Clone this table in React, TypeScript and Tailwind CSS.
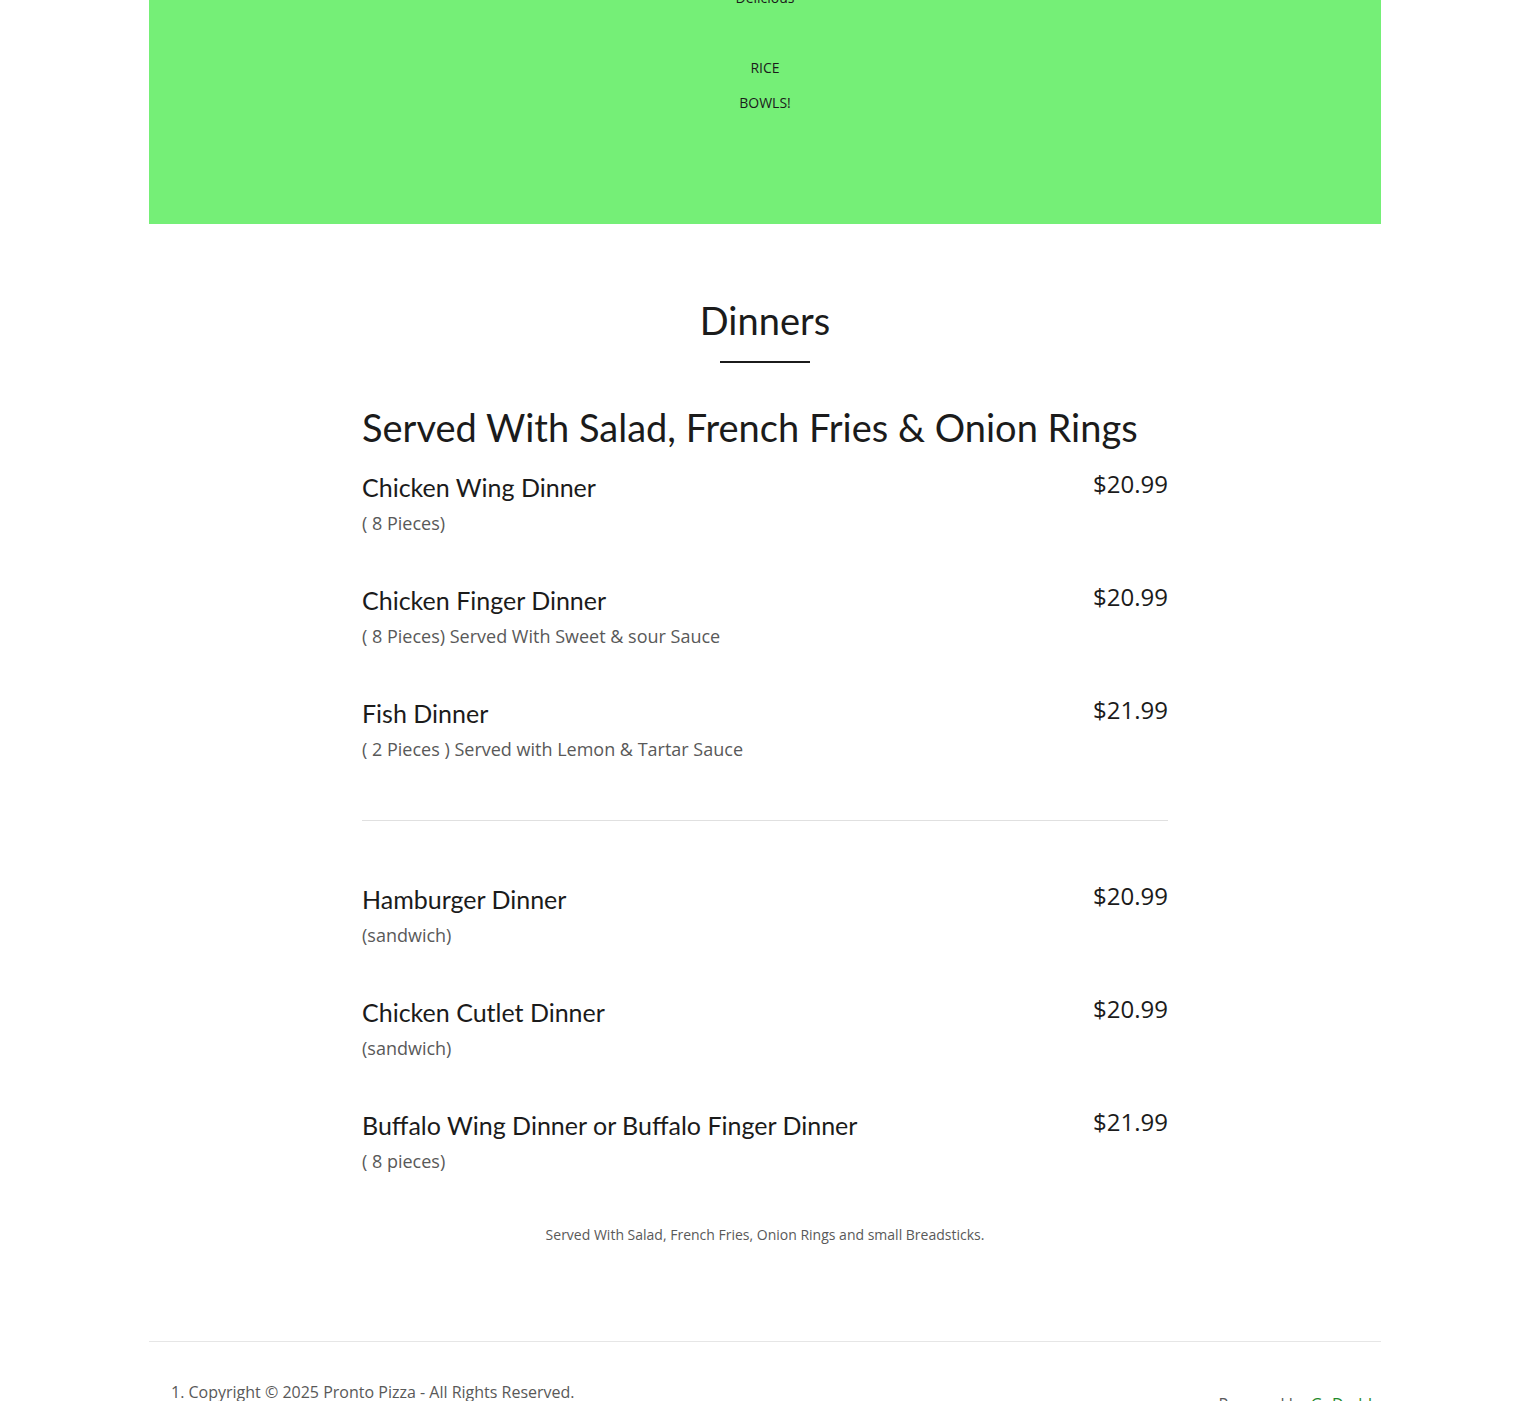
import React from "react";

const items1 = [
  { name: "Chicken Wing Dinner", desc: "( 8 Pieces)", price: "$20.99" },
  { name: "Chicken Finger Dinner", desc: "( 8 Pieces) Served With Sweet & sour Sauce", price: "$20.99" },
  { name: "Fish Dinner", desc: "( 2 Pieces ) Served with Lemon & Tartar Sauce", price: "$21.99" },
];
const items2 = [
  { name: "Hamburger Dinner", desc: "(sandwich)", price: "$20.99" },
  { name: "Chicken Cutlet Dinner", desc: "(sandwich)", price: "$20.99" },
  { name: "Buffalo Wing Dinner or Buffalo Finger Dinner", desc: "( 8 pieces)", price: "$21.99" },
];

const heading = { fontFamily: "Lato, 'Noto Sans', sans-serif" };
const body = { fontFamily: "'Open Sans', 'Noto Sans', sans-serif" };

function Item({ name, desc, price }: { name: string; desc: string; price: string }) {
  return (
    <div className="flex justify-between">
      <div className="flex flex-col gap-[7px]">
        <div className="text-[25px] leading-[32px] text-[#1b1b1b]" style={heading}>{name}</div>
        <div className="text-[18px] leading-[27px] text-[#595959]" style={body}>{desc}</div>
      </div>
      <div className="text-[24px] leading-[32px] text-[#1b1b1b] -mt-[3px]" style={body}>{price}</div>
    </div>
  );
}

export default function App() {
  return (
    <div className="bg-white min-h-[1401px] overflow-hidden">
      <div className="mt-[-20px] w-[1232px] mx-auto">
        <div className="bg-[#75ef77] pb-[104px] flex flex-col items-center text-[14px] leading-[35px] text-[#1b1b1b]" style={body}>
          <div>Delicious</div>
          <div>&nbsp;</div>
          <div>RICE</div>
          <div>BOWLS!</div>
        </div>

        <div className="w-[806px] mx-auto">
          <div className="mt-[74px] flex flex-col items-center">
            <h2 className="text-[38px] leading-[44px] text-[#1b1b1b]" style={heading}>Dinners</h2>
            <div className="mt-[19px] w-[90px] h-[2px] bg-[#1b1b1b]" />
          </div>

          <h3 className="mt-[40px] text-[38px] leading-[48px] text-[#1b1b1b] whitespace-nowrap" style={heading}>
            Served With Salad, French Fries &amp; Onion Rings
          </h3>

          <div className="mt-[20px] flex flex-col gap-[47px]">
            {items1.map((it) => (
              <Item key={it.name} {...it} />
            ))}
          </div>

          <div className="mt-[57px] h-px bg-[#e0e0e0]" />

          <div className="mt-[62px] flex flex-col gap-[47px]">
            {items2.map((it) => (
              <Item key={it.name} {...it} />
            ))}
          </div>

          <p className="mt-[50px] text-center text-[14px] leading-[20px] text-[#595959]" style={body}>
            Served With Salad, French Fries, Onion Rings and small Breadsticks.
          </p>
        </div>

        <div className="mt-[96px] h-px bg-[#e6e6e6]" />
        <div className="pl-[22px] pr-[1px] pt-[38px] flex justify-between" style={body}>
          <div className="text-[16px] leading-[24px] text-[#595959]">1. Copyright © 2025 Pronto Pizza - All Rights Reserved.</div>
          <div className="text-[16px] leading-[24px] text-[#595959] mt-[12px]">
            Powered by <span className="text-[#1f8a2a]">GoDaddy</span>
          </div>
        </div>
      </div>
    </div>
  );
}
